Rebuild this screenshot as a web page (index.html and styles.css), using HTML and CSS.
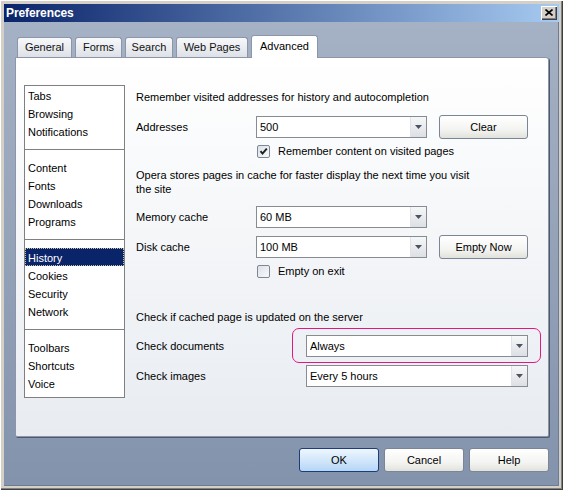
FILE: index.html
```html
<!DOCTYPE html>
<html>
<head>
<meta charset="utf-8">
<title>Preferences</title>
<link rel="stylesheet" href="styles.css">
</head>
<body>
<div class="window">
  <div class="titlebar">
    <span class="title">Preferences</span>
    <span class="close"><svg width="8" height="7" viewBox="0 0 8 7"><path d="M0.5 0.5L7.5 6.5M7.5 0.5L0.5 6.5" stroke="#000" stroke-width="1.6"/></svg></span>
  </div>
  <div class="body">
    <div class="tabs">
      <div class="tab w-general">General</div>
      <div class="tab w-forms">Forms</div>
      <div class="tab w-search">Search</div>
      <div class="tab w-web">Web Pages</div>
      <div class="tab active w-adv">Advanced</div>
    </div>
    <div class="panel">
      <ul class="list">
        <li>Tabs</li>
        <li>Browsing</li>
        <li>Notifications</li>
        <li class="sep"></li>
        <li>Content</li>
        <li>Fonts</li>
        <li>Downloads</li>
        <li>Programs</li>
        <li class="sep"></li>
        <li class="selected">History</li>
        <li>Cookies</li>
        <li>Security</li>
        <li>Network</li>
        <li class="sep"></li>
        <li>Toolbars</li>
        <li>Shortcuts</li>
        <li>Voice</li>
      </ul>
      <div class="content">
        <div class="heading h1">Remember visited addresses for history and autocompletion</div>
        <div class="field r-addr">
          <span class="label">Addresses</span>
          <div class="select"><span class="val">500</span><span class="arrow"><svg width="7" height="4" viewBox="0 0 7 4"><path d="M0 0H7L3.5 4Z" fill="#4b5363"/></svg></span></div>
          <button class="btn">Clear</button>
        </div>
        <div class="check r-remember">
          <span class="box"><svg width="11" height="11" viewBox="0 0 11 11"><path d="M2.5 5.2L4.5 7.6L8.8 2.6" fill="none" stroke="#1e1e1e" stroke-width="1.9"/></svg></span>
          <span>Remember content on visited pages</span>
        </div>
        <div class="para">Opera stores pages in cache for faster display the next time you visit the site</div>
        <div class="field r-mem">
          <span class="label">Memory cache</span>
          <div class="select"><span class="val">60 MB</span><span class="arrow"><svg width="7" height="4" viewBox="0 0 7 4"><path d="M0 0H7L3.5 4Z" fill="#4b5363"/></svg></span></div>
        </div>
        <div class="field r-disk">
          <span class="label">Disk cache</span>
          <div class="select"><span class="val">100 MB</span><span class="arrow"><svg width="7" height="4" viewBox="0 0 7 4"><path d="M0 0H7L3.5 4Z" fill="#4b5363"/></svg></span></div>
          <button class="btn">Empty Now</button>
        </div>
        <div class="check r-exit">
          <span class="box"></span>
          <span>Empty on exit</span>
        </div>
        <div class="heading h2">Check if cached page is updated on the server</div>
        <div class="field wide r-docs">
          <span class="label">Check documents</span>
          <div class="select long"><span class="hl"></span><span class="val">Always</span><span class="arrow"><svg width="7" height="4" viewBox="0 0 7 4"><path d="M0 0H7L3.5 4Z" fill="#4b5363"/></svg></span></div>
        </div>
        <div class="field wide r-imgs">
          <span class="label">Check images</span>
          <div class="select long"><span class="val">Every 5 hours</span><span class="arrow"><svg width="7" height="4" viewBox="0 0 7 4"><path d="M0 0H7L3.5 4Z" fill="#4b5363"/></svg></span></div>
        </div>
      </div>
    </div>
    <div class="buttons">
      <button class="btn dlg primary">OK</button>
      <button class="btn dlg">Cancel</button>
      <button class="btn dlg">Help</button>
    </div>
  </div>
</div>
</body>
</html>
```

FILE: styles.css
```css
* { box-sizing: border-box; }
html, body { margin: 0; padding: 0; }
body {
  font-family: "Liberation Sans", Arial, sans-serif;
  font-size: 11px;
  color: #000;
  background: #d4d0c8;
}
.window {
  width: 563px;
  height: 490px;
  padding: 4px;
  background: #d4d0c8;
  box-shadow: inset 1px 1px 0 #ffffff, inset -1px -1px 0 #404040, inset -2px -2px 0 #808080;
  display: flex;
  flex-direction: column;
}
.titlebar {
  height: 18px;
  flex: none;
  background: linear-gradient(to right, #0a246a, #a6caf0);
  display: flex;
  align-items: center;
  justify-content: space-between;
  padding: 0 2px 0 2px;
}
.title {
  color: #fff;
  font-weight: bold;
  font-size: 12px;
  letter-spacing: -0.1px;
}
.close {
  width: 16px;
  height: 14px;
  background: #d4d0c8;
  box-shadow: inset 1px 1px 0 #ffffff, inset -1px -1px 0 #404040, inset -2px -2px 0 #808080;
  display: flex;
  align-items: center;
  justify-content: center;
  padding: 0 1px 1px 0;
}
.close svg { display: block; }
.body {
  flex: 1;
  background: linear-gradient(#a5b1c4, #8393ac);
  padding: 13px 10px 0 11px;
  box-shadow: inset -1px -1px 0 #6d7b93;
}
.tabs {
  height: 22px;
  display: flex;
  align-items: flex-end;
  gap: 3px;
  padding-left: 2px;
}
.tab {
  height: 20px;
  border: 1px solid #8c96a8;
  border-bottom: none;
  border-radius: 3px 3px 0 0;
  background: linear-gradient(#f7f8fa, #dde1e7);
  display: flex;
  align-items: center;
  justify-content: center;
  padding-bottom: 1px;
  color: #111;
}
.tab.active {
  height: 23px;
  margin-bottom: -1px;
  background: #fff;
  position: relative;
  z-index: 1;
  color: #000;
  padding-bottom: 2px;
}
.w-general { width: 55px; }
.w-forms { width: 47px; }
.w-search { width: 48px; }
.w-web { width: 72px; }
.w-adv { width: 67px; }
.panel {
  height: 380px;
  border: 1px solid #8c96a8;
  border-radius: 0 3px 2px 2px;
  background: linear-gradient(#ffffff, #e8ecf1);
  box-shadow: 1px 1px 0 #4f596c;
  display: flex;
  align-items: flex-start;
  padding: 27px 8px 0 8px;
}
.list {
  list-style: none;
  margin: 0;
  padding: 0;
  width: 101px;
  height: 313px;
  border: 1px solid #808080;
  background: #fff;
  flex: none;
}
.list li {
  height: 18px;
  line-height: 20px;
  padding-left: 3px;
}
.list li.sep {
  display: flex;
  align-items: center;
  padding: 0;
}
.list li.sep::before {
  content: "";
  flex: 1;
  height: 1px;
  background: #808080;
}
.list li.selected {
  background: #0a246a;
  color: #fff;
  outline: 1px dotted #c9c19a;
  outline-offset: -1px;
}
.content {
  margin-left: 11px;
  display: flex;
  flex-direction: column;
}
.heading { line-height: 14px; height: 14px; }
.h1 { margin-top: 5px; }
.h2 { margin-top: 32px; }
.field {
  height: 24px;
  display: flex;
  align-items: center;
}
.label { width: 120px; flex: none; }
.field.wide .label { width: 170px; }
.r-addr { margin-top: 11px; }
.r-mem { margin-top: 9px; }
.r-disk { margin-top: 6px; }
.r-docs { margin-top: 10px; }
.r-imgs { margin-top: 6px; }
.select {
  position: relative;
  width: 171px;
  height: 22px;
  border: 1px solid #878b92;
  background: #fff;
  display: flex;
}
.select.long { width: 222px; }
.select .val {
  flex: 1;
  line-height: 20px;
  padding-left: 3px;
}
.select .arrow {
  width: 16px;
  border-left: 1px solid #dfe2e6;
  background: linear-gradient(#f6f7f8, #dcdfe4);
  display: flex;
  align-items: center;
  justify-content: center;
}
.select .arrow svg { display: block; }
.hl {
  position: absolute;
  left: -15px;
  top: -8px;
  width: 249px;
  height: 35px;
  border: 1px solid #e2187f;
  border-radius: 7px;
  pointer-events: none;
}
.btn {
  font-family: "Liberation Sans", Arial, sans-serif;
  font-size: 11px;
  color: #000;
  width: 89px;
  height: 24px;
  margin-left: 12px;
  border: 1px solid #7c8595;
  border-radius: 3px;
  background: linear-gradient(#ffffff 0%, #f4f4f2 60%, #e2e2dc 100%);
  padding: 0;
}
.check {
  height: 14px;
  display: flex;
  align-items: center;
  padding-left: 121px;
  gap: 8px;
}
.r-remember { margin-top: 5px; }
.r-exit { margin-top: 5px; }
.box {
  width: 13px;
  height: 13px;
  border: 1px solid #7d8797;
  border-radius: 2px;
  background: linear-gradient(135deg, #dce1e7, #f8f9fa);
  display: flex;
  align-items: center;
  justify-content: center;
}
.box svg { display: block; }
.para {
  margin-top: 10px;
  width: 342px;
  line-height: 14px;
}
.buttons {
  display: flex;
  justify-content: flex-end;
  gap: 5px;
  margin-top: 11px;
}
.btn.dlg {
  width: 80px;
  margin-left: 0;
}
.btn.primary {
  border-color: #1e3c77;
  background: linear-gradient(#eef6fe 0%, #d3e7fb 50%, #b5d6f7 100%);
}
```
